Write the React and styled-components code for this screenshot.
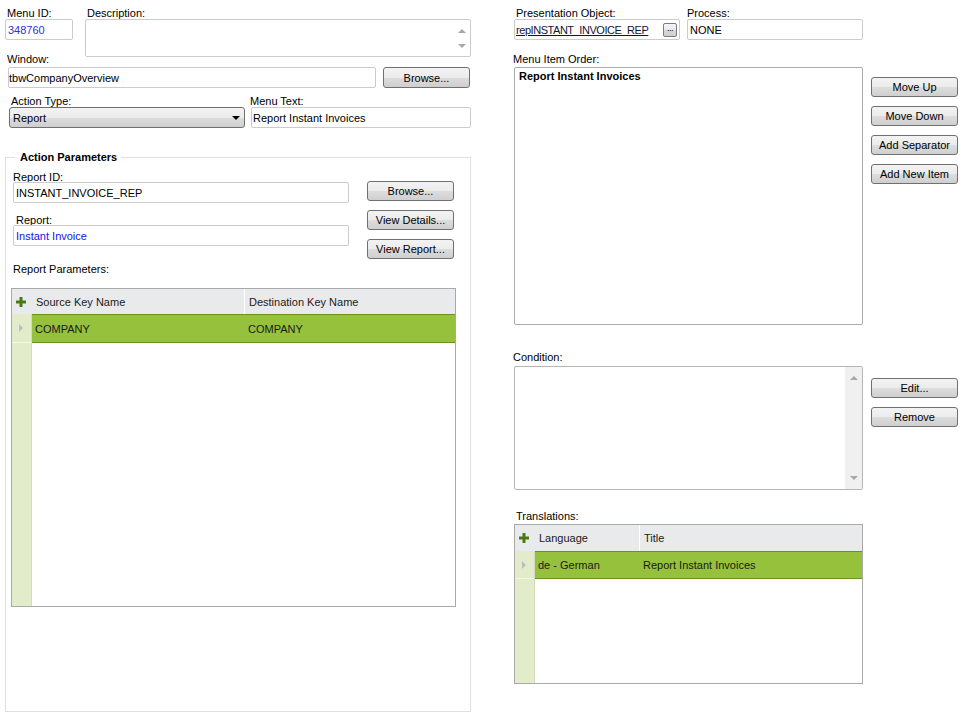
import React from "react";
import styled, { createGlobalStyle } from "styled-components";

const GlobalStyle = createGlobalStyle`
  html, body { margin: 0; padding: 0; background: #fff; }
  body { font-family: "Liberation Sans", Arial, sans-serif; font-size: 11px; color: #000; }
  * { box-sizing: border-box; }
`;

const Page = styled.div`
  display: flex;
  width: 969px;
  height: 719px;
  overflow: hidden;
  background: #fff;
`;

const LeftCol = styled.div`
  margin-left: 5px;
  width: 466px;
  display: flex;
  flex-direction: column;
`;

const RightCol = styled.div`
  margin-left: 42px;
  width: 446px;
  display: flex;
  flex-direction: column;
`;

const Row = styled.div`
  display: flex;
  align-items: flex-start;
  margin-top: ${(p) => p.$mt ?? 0}px;
  padding-top: ${(p) => p.$pt ?? 0}px;
  padding-left: ${(p) => p.$pl ?? 0}px;
`;

const Col = styled.div`
  display: flex;
  flex-direction: column;
  width: ${(p) => (p.$w ? `${p.$w}px` : "auto")};
  flex: ${(p) => (p.$w ? "none" : "1")};
  margin-left: ${(p) => p.$ml ?? 0}px;
  padding-top: ${(p) => p.$pt ?? 0}px;
  gap: ${(p) => p.$gap ?? 0}px;
`;

const Label = styled.div`
  font-size: 11px;
  line-height: 12px;
  height: ${(p) => p.$h ?? 12}px;
  white-space: nowrap;
  color: #000;
  padding-left: ${(p) => p.$indent ?? 0}px;
  margin-top: ${(p) => p.$mt ?? 0}px;
`;

const Field = styled.div`
  height: ${(p) => p.$h ?? 21}px;
  width: ${(p) => (p.$w ? `${p.$w}px` : "100%")};
  flex: none;
  border: 1px solid #cbcbcb;
  border-radius: 2px;
  background: #fff;
  padding: 0 ${(p) => p.$pad ?? 2}px;
  margin-left: ${(p) => p.$ml ?? 0}px;
  display: flex;
  align-items: center;
  justify-content: space-between;
  color: ${(p) => p.$color ?? "#000"};
  font-size: 11px;
  white-space: nowrap;
  overflow: hidden;
`;

const LinkText = styled.span`
  color: #14143a;
  text-decoration: underline;
  letter-spacing: -0.45px;
`;

const DotsButton = styled.div`
  width: 14px;
  height: 14px;
  margin-right: 1px;
  border: 1px solid #7c7c7c;
  border-radius: 2px;
  background: linear-gradient(#f6f6f6 0%, #e9e9e9 50%, #d8d8d8 51%, #cfcfcf 100%);
  font-size: 9px;
  line-height: 9px;
  text-align: center;
  color: #000;
  letter-spacing: -0.5px;
`;

const MultiBox = styled.div`
  width: ${(p) => (p.$w ? `${p.$w}px` : "100%")};
  height: ${(p) => p.$h}px;
  flex: none;
  border: 1px solid ${(p) => p.$border ?? "#cbcbcb"};
  border-radius: 2px;
  background: #fff;
  display: flex;
`;

const BoxContent = styled.div`
  flex: 1;
  padding: 2px 4px;
  font-size: 11px;
  line-height: 12px;
  font-weight: ${(p) => (p.$bold ? "bold" : "normal")};
`;

const ScrollTrack = styled.div`
  width: 17px;
  flex: none;
  background: ${(p) => (p.$shaded ? "#f0f0f0" : "transparent")};
  display: flex;
  flex-direction: column;
  align-items: center;
  justify-content: space-between;
  padding: ${(p) => p.$padT}px 0 ${(p) => p.$padB}px;
`;

const Arrow = styled.div`
  width: 0;
  height: 0;
  border-left: 4px solid transparent;
  border-right: 4px solid transparent;
  ${(p) =>
    p.$up
      ? "border-bottom: 4px solid #a8a8a8;"
      : "border-top: 4px solid #a8a8a8;"}
`;

const Button = styled.div`
  width: 87px;
  height: ${(p) => p.$h ?? 20}px;
  flex: none;
  border: 1px solid #707070;
  border-radius: 3px;
  background: linear-gradient(#f3f3f3 0%, #ebebeb 50%, #dddddd 51%, #cfcfcf 100%);
  font-size: 11px;
  color: #000;
  display: flex;
  align-items: center;
  justify-content: center;
  white-space: nowrap;
  margin-left: ${(p) => p.$ml ?? 0}px;
`;

const Select = styled.div`
  width: ${(p) => p.$w}px;
  height: 21px;
  border: 1px solid #707070;
  border-radius: 3px;
  background: linear-gradient(#f3f3f3 0%, #ebebeb 50%, #dddddd 51%, #cfcfcf 100%);
  display: flex;
  align-items: center;
  justify-content: space-between;
  padding: 0 4px 0 3px;
  font-size: 11px;
`;

const SelectArrow = styled.div`
  width: 0;
  height: 0;
  border-left: 4px solid transparent;
  border-right: 4px solid transparent;
  border-top: 4px solid #000;
`;

const GroupBox = styled.fieldset`
  margin: 22px 0 0 0;
  padding: 7px 0 104px 7px;
  border: 1px solid #e0e0e0;
  width: 466px;
  min-width: 0;
`;

const Legend = styled.legend`
  margin-left: 2px;
  padding: 0 4px 0 5px;
  font-weight: bold;
  font-size: 11px;
  line-height: 14px;
`;

/* ---------- data grid ---------- */

const Grid = styled.div`
  width: ${(p) => p.$w}px;
  height: ${(p) => p.$h}px;
  margin-top: ${(p) => p.$mt ?? 0}px;
  margin-left: ${(p) => p.$ml ?? 0}px;
  border: 1px solid #a9a9a9;
  display: flex;
  flex-direction: column;
  font-family: "Liberation Sans", Arial, sans-serif;
  font-size: 11px;
  color: #1a1a1a;
  background: #fff;
`;

const HeaderRow = styled.div`
  height: ${(p) => p.$h}px;
  flex: none;
  display: flex;
  background: #e9eaec;
`;

const SelCell = styled.div`
  width: 20px;
  flex: none;
  display: flex;
  align-items: center;
  padding-left: ${(p) => p.$pl ?? 0}px;
  background: ${(p) => (p.$header ? "transparent" : "#e2ecca")};
  border-right: ${(p) => (p.$header ? "none" : "1px solid #d3dcc0")};
  border-bottom: ${(p) => (p.$line ? "1px solid #f3f7ea" : "none")};
`;

const HeadCell = styled.div`
  width: ${(p) => (p.$w ? `${p.$w}px` : "auto")};
  flex: ${(p) => (p.$w ? "none" : "1")};
  display: flex;
  align-items: center;
  padding-left: 4px;
  border-right: ${(p) => (p.$divider ? "1px solid #ffffff" : "none")};
  white-space: nowrap;
`;

const DataRow = styled.div`
  height: ${(p) => p.$h}px;
  flex: none;
  display: flex;
`;

const DataCells = styled.div`
  flex: 1;
  display: flex;
  background: #95c13d;
  border-top: 1px solid #6b9120;
  border-bottom: 1px solid #6b9120;
`;

const DataCell = styled.div`
  width: ${(p) => (p.$w ? `${p.$w}px` : "auto")};
  flex: ${(p) => (p.$w ? "none" : "1")};
  display: flex;
  align-items: center;
  padding-left: 3px;
  white-space: nowrap;
`;

const Filler = styled.div`
  flex: 1;
  display: flex;
`;

const RowPointer = styled.div`
  margin-left: 7px;
  width: 0;
  height: 0;
  border-top: 4px solid transparent;
  border-bottom: 4px solid transparent;
  border-left: 4px solid #bdbdbd;
`;

const PlusIcon = () => (
  <svg width="10" height="10" viewBox="0 0 10 10">
    <rect x="3.5" y="0" width="3" height="10" fill="#4a7a17" />
    <rect x="0" y="3.5" width="10" height="3" fill="#4a7a17" />
  </svg>
);

const DataGrid = ({ w, h, mt, ml, col1, cols, row, headerH, rowH }) => (
  <Grid $w={w} $h={h} $mt={mt} $ml={ml}>
    <HeaderRow $h={headerH}>
      <SelCell $header $pl={4}>
        <PlusIcon />
      </SelCell>
      <HeadCell $w={col1} $divider>
        {cols[0]}
      </HeadCell>
      <HeadCell>{cols[1]}</HeadCell>
    </HeaderRow>
    <DataRow $h={rowH}>
      <SelCell $line>
        <RowPointer />
      </SelCell>
      <DataCells>
        <DataCell $w={col1}>{row[0]}</DataCell>
        <DataCell>{row[1]}</DataCell>
      </DataCells>
    </DataRow>
    <Filler>
      <SelCell />
    </Filler>
  </Grid>
);

export default function App() {
  return (
    <>
      <GlobalStyle />
      <Page>
        <LeftCol>
          <Row $pt={7}>
            <Col $w={68}>
              <Label $indent={2}>Menu ID:</Label>
              <Field $color="#2f2fe0">348760</Field>
              <Label $indent={2} $mt={13}>
                Window:
              </Label>
            </Col>
            <Col $ml={12}>
              <Label $indent={2}>Description:</Label>
              <MultiBox $h={38}>
                <BoxContent />
                <ScrollTrack $padT={9} $padB={8}>
                  <Arrow $up />
                  <Arrow />
                </ScrollTrack>
              </MultiBox>
            </Col>
          </Row>
          <Row $mt={2} $pl={3}>
            <Field $w={368} $pad={0}>
              tbwCompanyOverview
            </Field>
            <Button $ml={7} $h={21}>
              Browse...
            </Button>
          </Row>
          <Row $mt={7} $pl={4}>
            <Col $w={236}>
              <Label $indent={2}>Action Type:</Label>
              <Select $w={236}>
                <span>Report</span>
                <SelectArrow />
              </Select>
            </Col>
            <Col $w={221} $ml={5}>
              <Label>Menu Text:</Label>
              <Field $w={220} $pad={1} $ml={1}>
                Report Instant Invoices
              </Field>
            </Col>
          </Row>

          <GroupBox>
            <Legend>Action Parameters</Legend>
            <Row>
              <Col $w={336}>
                <Label $h={11}>Report ID:</Label>
                <Field>INSTANT_INVOICE_REP</Field>
                <Label $h={11} $mt={11} $indent={3}>
                  Report:
                </Label>
                <Field $color="#1414e6">Instant Invoice</Field>
              </Col>
              <Col $w={87} $ml={18} $pt={10} $gap={9}>
                <Button>Browse...</Button>
                <Button>View Details...</Button>
                <Button>View Report...</Button>
              </Col>
            </Row>
            <Label $mt={4}>Report Parameters:</Label>
            <DataGrid
              w={445}
              h={319}
              mt={13}
              ml={-2}
              col1={213}
              headerH={25}
              rowH={29}
              cols={["Source Key Name", "Destination Key Name"]}
              row={["COMPANY", "COMPANY"]}
            />
          </GroupBox>
        </LeftCol>

        <RightCol>
          <Row $pt={7}>
            <Col $w={166} $ml={1}>
              <Label $indent={2}>Presentation Object:</Label>
              <Field $pad={1}>
                <LinkText>repINSTANT_INVOICE_REP</LinkText>
                <DotsButton>...</DotsButton>
              </Field>
            </Col>
            <Col $w={176} $ml={7}>
              <Label>Process:</Label>
              <Field>NONE</Field>
            </Col>
          </Row>
          <Label $mt={13}>Menu Item Order:</Label>
          <Row $mt={2} $pl={1}>
            <MultiBox $w={349} $h={258} $border="#ababab">
              <BoxContent $bold>Report Instant Invoices</BoxContent>
            </MultiBox>
            <Col $w={87} $ml={8} $pt={10} $gap={9}>
              <Button>Move Up</Button>
              <Button>Move Down</Button>
              <Button>Add Separator</Button>
              <Button>Add New Item</Button>
            </Col>
          </Row>
          <Label $mt={26}>Condition:</Label>
          <Row $mt={3} $pl={1}>
            <MultiBox $w={349} $h={124} $border="#b5b5b5">
              <BoxContent />
              <ScrollTrack $shaded $padT={9} $padB={9}>
                <Arrow $up />
                <Arrow />
              </ScrollTrack>
            </MultiBox>
            <Col $w={87} $ml={8} $pt={12} $gap={9}>
              <Button>Edit...</Button>
              <Button>Remove</Button>
            </Col>
          </Row>
          <Label $mt={20} $indent={3}>
            Translations:
          </Label>
          <DataGrid
            w={349}
            h={160}
            mt={2}
            ml={1}
            col1={105}
            headerH={26}
            rowH={28}
            cols={["Language", "Title"]}
            row={["de - German", "Report Instant Invoices"]}
          />
        </RightCol>
      </Page>
    </>
  );
}
